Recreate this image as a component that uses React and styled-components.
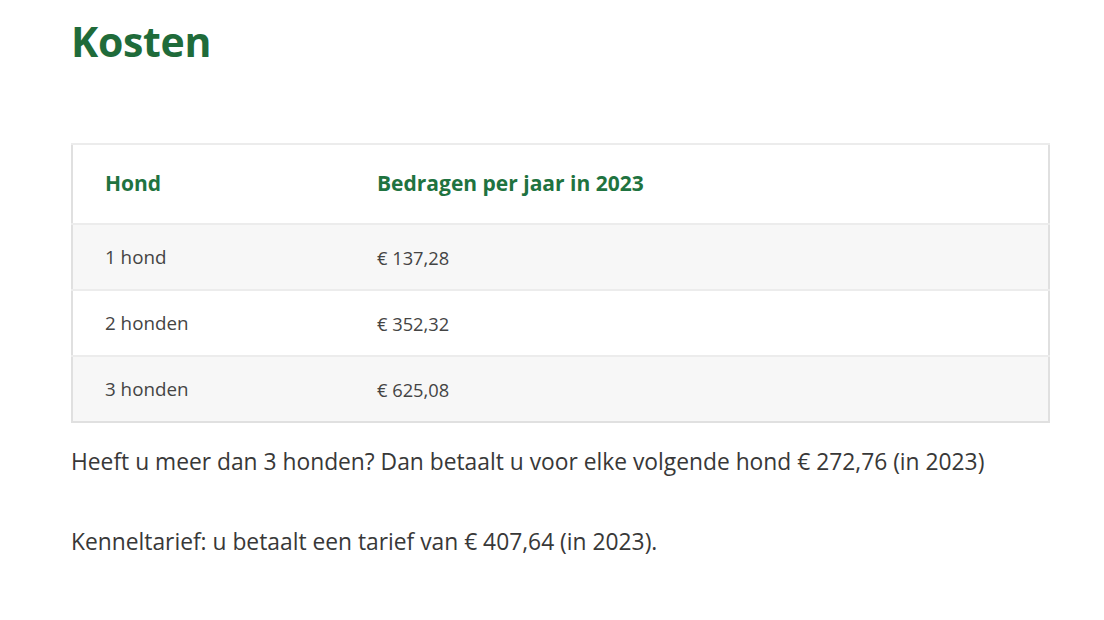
import React from "react";
import styled, { createGlobalStyle } from "styled-components";

const Global = createGlobalStyle`
  html, body { margin: 0; padding: 0; background: #fff; }
  body { font-family: "Open Sans", "Noto Sans", sans-serif; }
`;

const Page = styled.main`
  padding: 10px 54px 0 71px;
`;

const Title = styled.h1`
  margin: 0;
  font-size: 41px;
  line-height: 62px;
  font-weight: 700;
  color: #1f6b3a;
  letter-spacing: -0.3px;
`;

const Table = styled.table`
  margin-top: 71px;
  width: 979px;
  border-collapse: collapse;
  border: 2px solid #e0e0e0;
`;

const Row = styled.tr`
  background: ${(p) => (p.$alt ? "#f7f7f7" : "#ffffff")};
  border-top: 2px solid #ececec;
  height: ${(p) => (p.$head ? "80px" : "66px")};
`;

const Th = styled.th`
  text-align: left;
  padding: 0 0 2px 32px;
  font-size: 21px;
  font-weight: 700;
  color: #1f7340;
  width: ${(p) => p.$w || "auto"};
`;

const Td = styled.td`
  padding: 0 0 0 32px;
  font-size: ${(p) => (p.$small ? "18.3px" : "18.8px")};
  color: #444;
`;

const Para = styled.p`
  margin: ${(p) => p.$mt} 0 0;
  font-size: 22.8px;
  line-height: 30px;
  color: #383838;
`;

const rows = [
  ["1 hond", "€ 137,28"],
  ["2 honden", "€ 352,32"],
  ["3 honden", "€ 625,08"],
];

export default function App() {
  return (
    <>
      <Global />
      <Page>
        <Title>Kosten</Title>
        <Table>
          <thead>
            <Row $head>
              <Th $w="240px">Hond</Th>
              <Th>Bedragen per jaar in 2023</Th>
            </Row>
          </thead>
          <tbody>
            {rows.map((r, i) => (
              <Row key={r[0]} $alt={i % 2 === 0}>
                <Td>{r[0]}</Td>
                <Td $small>{r[1]}</Td>
              </Row>
            ))}
          </tbody>
        </Table>
        <Para $mt="24px">
          Heeft u meer dan 3 honden? Dan betaalt u voor elke volgende hond € 272,76 (in 2023)
        </Para>
        <Para $mt="50px">Kenneltarief: u betaalt een tarief van € 407,64 (in 2023).</Para>
      </Page>
    </>
  );
}
